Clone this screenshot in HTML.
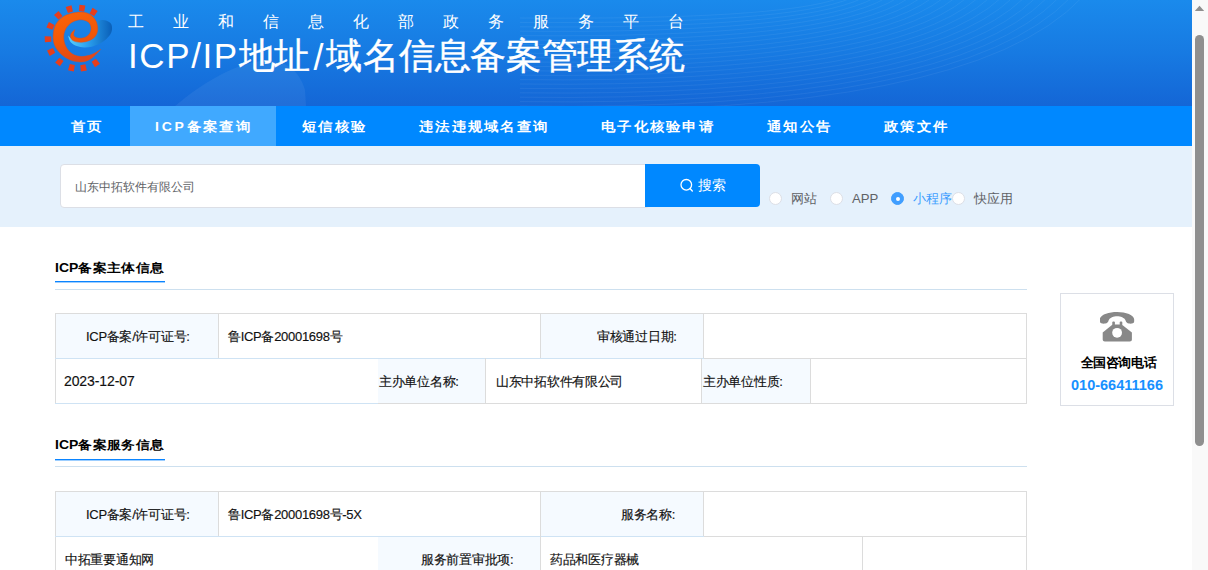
<!DOCTYPE html>
<html><head><meta charset="utf-8">
<style>
*{margin:0;padding:0;box-sizing:border-box}
html,body{width:1208px;height:570px;overflow:hidden;background:#fff;font-family:"Liberation Sans",sans-serif;color:#303133}
.abs{position:absolute}
#header{position:absolute;left:0;top:0;width:1192px;height:106px;background:linear-gradient(180deg,#1a8aec 0%,#177ae2 50%,#1466d6 100%);overflow:hidden}
#nav{position:absolute;left:0;top:106px;width:1192px;height:40px;background:#0088ff}
#nav .it{position:absolute;top:0;height:40px;line-height:40px;color:#fff;font-size:14px;font-weight:bold;letter-spacing:2.3px;white-space:nowrap;transform:scaleY(0.9);transform-origin:50% 50%}
#active{position:absolute;left:130px;top:0;width:146px;height:40px;background:#40a9ff}
#search{position:absolute;left:0;top:146px;width:1192px;height:81px;background:#e5f1fc}
#input{position:absolute;left:60px;top:164px;width:590px;height:44px;background:#fff;border:1px solid #dcdfe6;border-radius:4px}
#input span{position:absolute;left:14px;top:1px;line-height:42px;font-size:12px;color:#606266}
#btn{position:absolute;left:645px;top:164px;width:115px;height:43px;background:#0088ff;border-radius:0 4px 4px 0;color:#fff;font-size:14px}
.radio{position:absolute;top:192px;width:13px;height:13px;border-radius:50%;background:#fff;border:1px solid #dcdfe6}
.radio.on{background:#409eff;border-color:#409eff}
.radio.on:after{content:"";position:absolute;left:3.5px;top:3.5px;width:4px;height:4px;border-radius:50%;background:#fff}
.rl{position:absolute;top:189.5px;font-size:13.2px;line-height:18px;color:#606266;white-space:nowrap}
.stitle{position:absolute;left:55px;font-size:14px;line-height:18px;letter-spacing:0.3px;font-weight:bold;color:#000;white-space:nowrap;transform:scaleY(0.87);transform-origin:0 0}
.uline{position:absolute;left:55px;width:110px;height:1px;background:#0a84ff;box-shadow:0 1px 0 rgba(10,132,255,0.4)}
.hline{position:absolute;left:55px;width:972px;height:1px;background:#cde0ef}
.cell{position:absolute;font-size:13px;letter-spacing:-0.3px;color:#111;-webkit-text-stroke:0.15px #111;white-space:nowrap;line-height:18px}
.lab{position:absolute;background:#f5faff}
.bd{position:absolute;background:#dcdcdc}
.bdb{position:absolute;background:#cfe3f4}
#phone{position:absolute;left:1060px;top:293px;width:114px;height:113px;border:1px solid #dcdfe6;background:#fff}
#sb{position:absolute;left:1192px;top:0;width:16px;height:570px;background:#f9f9f9}
#thumb{position:absolute;left:1195px;top:35px;width:9px;height:411px;background:#8f8f8f;border-radius:4.5px}
</style></head><body>
<div id="header">
  <svg class="abs" style="left:0;top:0" width="1192" height="106">
    <defs>
      <linearGradient id="wg" x1="0" y1="0" x2="1" y2="1">
        <stop offset="0" stop-color="#ffffff" stop-opacity="0.10"/>
        <stop offset="1" stop-color="#ffffff" stop-opacity="0.02"/>
      </linearGradient>
    </defs>
    <path d="M175 106 C 230 60, 290 40, 305 90 L 306 106 Z" fill="#ffffff" fill-opacity="0.06"/>
    <g fill="none" stroke="#ffffff" stroke-opacity="0.06" stroke-width="1"><path d="M520 18.0 Q 780.0 20.0, 840.0 -2"/><path d="M520 22.4 Q 789.0 24.6, 851.5 -2"/><path d="M520 26.8 Q 798.0 29.2, 863.0 -2"/><path d="M520 31.2 Q 807.0 33.8, 874.5 -2"/><path d="M520 35.6 Q 816.0 38.4, 886.0 -2"/><path d="M520 40.0 Q 825.0 43.0, 897.5 -2"/><path d="M520 44.4 Q 834.0 47.6, 909.0 -2"/><path d="M520 48.8 Q 843.0 52.2, 920.5 -2"/><path d="M520 53.2 Q 852.0 56.8, 932.0 -2"/><path d="M520 57.6 Q 861.0 61.4, 943.5 -2"/><path d="M520 62.0 Q 870.0 66.0, 955.0 -2"/><path d="M520 66.4 Q 879.0 70.6, 966.5 -2"/><path d="M520 70.8 Q 888.0 75.2, 978.0 -2"/><path d="M520 75.2 Q 897.0 79.8, 989.5 -2"/><path d="M520 79.6 Q 906.0 84.4, 1001.0 -2"/><path d="M520 84.0 Q 915.0 89.0, 1012.5 -2"/><path d="M520 88.4 Q 924.0 93.6, 1024.0 -2"/><path d="M520 92.8 Q 933.0 98.2, 1035.5 -2"/><path d="M520 97.2 Q 942.0 102.8, 1047.0 -2"/><path d="M520 101.6 Q 951.0 107.4, 1058.5 -2"/><path d="M520 106.0 Q 960.0 112.0, 1070.0 -2"/><path d="M520 110.4 Q 969.0 116.6, 1081.5 -2"/></g>
  </svg>
  <svg class="abs" style="left:40px;top:0" width="80" height="80" viewBox="0 0 80 80">
    <defs>
      <linearGradient id="og" x1="0" y1="0" x2="0.3" y2="1">
        <stop offset="0" stop-color="#fa640a"/>
        <stop offset="0.6" stop-color="#f25806"/>
        <stop offset="1" stop-color="#e24818"/>
      </linearGradient>
      <linearGradient id="bg2" x1="0" y1="0" x2="1" y2="0">
        <stop offset="0" stop-color="#5ad0ff"/>
        <stop offset="0.45" stop-color="#2aa0ee"/>
        <stop offset="1" stop-color="#0a5fb8"/>
      </linearGradient>
    </defs>
    <g fill="#e63e1c"><path d="M-3 -3.4 L3 -3.4 L2.6 3 L-2.6 3 Z" transform="translate(18.52 15.56) rotate(-41.0)"/><path d="M-3 -3.4 L3 -3.4 L2.6 3 L-2.6 3 Z" transform="translate(29.58 9.47) rotate(-16.7)"/><path d="M-3 -3.4 L3 -3.4 L2.6 3 L-2.6 3 Z" transform="translate(41.96 8.44) rotate(7.2)"/><path d="M-3 -3.4 L3 -3.4 L2.6 3 L-2.6 3 Z" transform="translate(53.38 12.32) rotate(30.4)"/><path d="M-3 -3.4 L3 -3.4 L2.6 3 L-2.6 3 Z" transform="translate(10.75 26.09) rotate(-66.2)"/><path d="M-3 -3.4 L3 -3.4 L2.6 3 L-2.6 3 Z" transform="translate(8.22 39.25) rotate(268.0)"/><path d="M-3 -3.4 L3 -3.4 L2.6 3 L-2.6 3 Z" transform="translate(11.42 51.73) rotate(243.2)"/><path d="M-3 -3.4 L3 -3.4 L2.6 3 L-2.6 3 Z" transform="translate(19.61 61.74) rotate(218.3)"/><path d="M-3 -3.4 L3 -3.4 L2.6 3 L-2.6 3 Z" transform="translate(31.66 67.48) rotate(192.6)"/><path d="M-3 -3.4 L3 -3.4 L2.6 3 L-2.6 3 Z" transform="translate(43.31 67.76) rotate(170.2)"/><path d="M-3 -3.4 L3 -3.4 L2.6 3 L-2.6 3 Z" transform="translate(55.54 62.68) rotate(144.7)"/></g>
    <path d="M27.97 35.51 C 28.53 36.73, 29.28 40.88, 31.33 42.81 C 33.39 44.74, 36.76 46.48, 40.32 47.07 C 43.87 47.67, 48.74 47.39, 52.67 46.40 C 56.60 45.41, 60.81 43.41, 63.90 41.12 C 66.98 38.84, 69.92 35.42, 71.19 32.70 C 72.47 29.99, 72.19 26.81, 71.53 24.84 C 70.88 22.88, 69.10 21.70, 67.26 20.91 C 65.43 20.13, 62.40 20.03, 60.53 20.13 C 58.66 20.22, 56.78 21.25, 56.04 21.47 C 56.22 22.97, 57.72 27.84, 57.16 30.46 C 56.60 33.08, 54.91 35.32, 52.67 37.19 C 50.42 39.07, 46.68 41.12, 43.69 41.69 C 40.69 42.25, 37.32 41.59, 34.70 40.56 C 32.08 39.53, 29.09 36.35, 27.97 35.51 Z" fill="url(#bg2)"/>
    <path d="M60.53 49.55 C 59.22 50.86, 55.47 55.38, 52.67 57.40 C 49.86 59.43, 47.05 61.11, 43.69 61.67 C 40.32 62.23, 36.01 61.86, 32.46 60.77 C 28.90 59.69, 25.25 57.59, 22.35 55.16 C 19.45 52.73, 16.59 49.36, 15.05 46.18 C 13.52 43.00, 13.05 39.63, 13.14 36.07 C 13.24 32.52, 13.89 28.12, 15.61 24.84 C 17.34 21.57, 20.11 18.48, 23.47 16.42 C 26.84 14.36, 31.90 13.05, 35.83 12.49 C 39.76 11.93, 43.87 11.93, 47.05 13.05 C 50.24 14.18, 53.14 16.70, 54.91 19.23 C 56.69 21.75, 57.63 25.40, 57.72 28.21 C 57.81 31.02, 56.88 34.01, 55.47 36.07 C 54.07 38.13, 51.64 39.53, 49.30 40.56 C 46.96 41.59, 43.97 42.15, 41.44 42.25 C 38.91 42.34, 35.92 41.87, 34.14 41.12 C 32.36 40.38, 31.24 39.07, 30.77 37.76 C 30.30 36.45, 30.64 34.63, 31.33 33.26 C 32.03 31.90, 34.33 30.18, 34.93 29.56 C 34.74 30.18, 33.94 32.18, 33.80 33.26 C 33.67 34.35, 33.43 35.27, 34.14 36.07 C 34.85 36.88, 36.29 37.87, 38.07 38.09 C 39.85 38.32, 42.84 38.22, 44.81 37.42 C 46.77 36.61, 48.83 34.99, 49.86 33.26 C 50.89 31.54, 51.26 28.96, 50.98 27.09 C 50.70 25.22, 49.77 23.25, 48.18 22.04 C 46.59 20.82, 43.87 19.88, 41.44 19.79 C 39.01 19.70, 36.01 20.26, 33.58 21.47 C 31.15 22.69, 28.49 24.66, 26.84 27.09 C 25.20 29.52, 23.89 32.89, 23.70 36.07 C 23.51 39.25, 24.26 43.18, 25.72 46.18 C 27.18 49.17, 29.84 52.31, 32.46 54.04 C 35.08 55.76, 38.26 56.41, 41.44 56.51 C 44.62 56.60, 48.36 55.76, 51.55 54.60 C 54.73 53.44, 59.03 50.39, 60.53 49.55 Z" fill="url(#og)" stroke="#e04a1a" stroke-width="0.5"/>
  </svg>
  <div class="abs" style="left:128px;top:13px;font-size:16px;line-height:18px;letter-spacing:29.03px;color:#fff;white-space:nowrap">工业和信息化部政务服务平台</div>
  <div class="abs" style="left:128px;top:33.8px;font-size:36px;letter-spacing:-0.35px;line-height:44px;color:#fff;white-space:nowrap;-webkit-text-stroke:0.4px #fff"><span style="letter-spacing:1.6px;font-size:35px;-webkit-text-stroke:0">ICP/IP</span>地<span style="letter-spacing:3px">址</span><span style="letter-spacing:3px;-webkit-text-stroke:0;position:relative;top:2px">/</span><span style="letter-spacing:1px">域</span>名信息备案管理系统</div>
</div>
<div id="nav">
  <div id="active"></div>
  <div class="it" style="left:71px">首页</div>
  <div class="it" style="left:155px"><span style="letter-spacing:2.8px">ICP</span>备案查询</div>
  <div class="it" style="left:302px">短信核验</div>
  <div class="it" style="left:419px">违法违规域名查询</div>
  <div class="it" style="left:601px">电子化核验申请</div>
  <div class="it" style="left:767px">通知公告</div>
  <div class="it" style="left:884px">政策文件</div>
</div>
<div id="search"></div>
<div id="input"><span>山东中拓软件有限公司</span></div>
<div id="btn">
  <svg class="abs" style="left:34.5px;top:13.5px" width="14" height="15" viewBox="0 0 14 15"><circle cx="6.3" cy="6.8" r="5.3" fill="none" stroke="#fff" stroke-width="1.3"/><path d="M10 10.6 L12.3 12.9" stroke="#fff" stroke-width="1.4" stroke-linecap="round"/></svg>
  <div class="abs" style="left:53px;top:11px;font-size:14px;line-height:20px;color:#fff">搜索</div>
</div>
<div class="radio" style="left:769px"></div><div class="rl" style="left:791px">网站</div>
<div class="radio" style="left:830px"></div><div class="rl" style="left:852px">APP</div>
<div class="radio on" style="left:891px"></div><div class="rl" style="left:913px;color:#409eff">小程序</div>
<div class="radio" style="left:952px"></div><div class="rl" style="left:974px">快应用</div>

<!-- section 1 -->
<div class="stitle" style="top:260px"><span style="letter-spacing:0px">ICP</span>备案主体信息</div>
<div class="uline" style="top:281px"></div>
<div class="hline" style="top:289px"></div>


<!-- table 1 -->
<div class="lab" style="left:55px;top:313px;width:164px;height:45px"></div>
<div class="lab" style="left:540px;top:313px;width:164px;height:45px"></div>
<div class="lab" style="left:378px;top:358px;width:107px;height:45px"></div>
<div class="lab" style="left:701px;top:358px;width:109px;height:45px"></div>
<div class="bd" style="left:55px;top:313px;width:972px;height:1px"></div>
<div class="bd" style="left:55px;top:313px;width:1px;height:91px"></div>
<div class="bd" style="left:1026px;top:313px;width:1px;height:91px"></div>
<div class="bdb" style="left:55px;top:358px;width:649px;height:1px"></div>
<div class="bd" style="left:704px;top:358px;width:322px;height:1px"></div>
<div class="bdb" style="left:55px;top:403px;width:323px;height:1px"></div>
<div class="bd" style="left:378px;top:403px;width:649px;height:1px"></div>
<div class="bd" style="left:218px;top:313px;width:1px;height:45px"></div>
<div class="bd" style="left:540px;top:313px;width:1px;height:45px"></div>
<div class="bd" style="left:703px;top:313px;width:1px;height:45px"></div>
<div class="bd" style="left:485px;top:358px;width:1px;height:45px"></div>
<div class="bd" style="left:701px;top:358px;width:1px;height:45px"></div>
<div class="bd" style="left:810px;top:358px;width:1px;height:45px"></div>
<div class="cell" style="left:86px;top:328px">ICP备案/许可证号:</div>
<div class="cell" style="left:228px;top:328px">鲁ICP备20001698号</div>
<div class="cell" style="left:597px;top:328px">审核通过日期:</div>
<div class="cell" style="left:64px;top:371.5px;font-size:14px;letter-spacing:-0.1px">2023-12-07</div>
<div class="cell" style="left:379px;top:373px">主办单位名称:</div>
<div class="cell" style="left:496px;top:373px">山东中拓软件有限公司</div>
<div class="cell" style="left:703px;top:373px">主办单位性质:</div>

<!-- section 2 -->
<div class="stitle" style="top:437px"><span style="letter-spacing:0px">ICP</span>备案服务信息</div>
<div class="uline" style="top:459px"></div>
<div class="hline" style="top:466px"></div>

<!-- table 2 -->
<div class="lab" style="left:55px;top:491px;width:164px;height:45px"></div>
<div class="lab" style="left:540px;top:491px;width:164px;height:45px"></div>
<div class="lab" style="left:378px;top:536px;width:163px;height:45px"></div>
<div class="bd" style="left:55px;top:491px;width:972px;height:1px"></div>
<div class="bd" style="left:55px;top:491px;width:1px;height:90px"></div>
<div class="bd" style="left:1026px;top:491px;width:1px;height:90px"></div>
<div class="bdb" style="left:55px;top:536px;width:649px;height:1px"></div>
<div class="bd" style="left:704px;top:536px;width:322px;height:1px"></div>
<div class="bd" style="left:218px;top:491px;width:1px;height:45px"></div>
<div class="bd" style="left:540px;top:491px;width:1px;height:90px"></div>
<div class="bd" style="left:703px;top:491px;width:1px;height:45px"></div>
<div class="bd" style="left:862px;top:536px;width:1px;height:45px"></div>
<div class="cell" style="left:86px;top:506px">ICP备案/许可证号:</div>
<div class="cell" style="left:228px;top:506px">鲁ICP备20001698号-5X</div>
<div class="cell" style="left:621px;top:506px">服务名称:</div>
<div class="cell" style="left:65px;top:551px">中拓重要通知网</div>
<div class="cell" style="left:421px;top:551px">服务前置审批项:</div>
<div class="cell" style="left:550px;top:551px">药品和医疗器械</div>
<div id="phone">
  <svg class="abs" style="left:39px;top:18px" width="36" height="31" viewBox="0 0 36 31">
    <path d="M-0.2 8 C -0.6 3, 8 0, 17.1 0 C 26 0, 34.6 3, 34.2 8 L 34.1 10 C 33.9 11.6, 31 11.9, 29 11.6 C 27 11.3, 26.1 10, 25.6 8.4 C 24.5 5.6, 20.5 4.2, 17.1 4.2 C 13.7 4.2, 9.7 5.6, 8.6 8.4 C 8.1 10, 7.2 11.3, 5.2 11.6 C 3.2 11.9, 0.2 11.6, 0 10 Z" fill="#888"/>
    <rect x="12.3" y="9.6" width="2.6" height="4" rx="1" fill="#888"/>
    <rect x="19.7" y="9.6" width="2.6" height="4" rx="1" fill="#888"/>
    <path d="M12.6 12.6 L 21.7 12.6 L 31.9 20.4 L 31.9 27.6 C 31.9 28.8, 31 29.6, 29.8 29.6 L 4.8 29.6 C 3.6 29.6, 2.7 28.8, 2.7 27.6 L 2.7 20.4 Z" fill="#888"/>
    <circle cx="17.1" cy="20.8" r="4.9" fill="#fff"/>
  </svg>
  <div class="abs" style="left:1.5px;top:59.5px;width:112px;text-align:center;font-size:13px;letter-spacing:-0.35px;line-height:18px;font-weight:bold;color:#000">全国咨询电话</div>
  <div class="abs" style="left:0;top:82px;width:112px;text-align:center;font-size:14.5px;line-height:18px;font-weight:bold;color:#1890ff">010-66411166</div>
</div>
<div id="sb"><svg class="abs" style="left:0;top:0" width="16" height="16"><path d="M2.8 11 L12.2 11 L7.5 5.7 Z" fill="#8f8f8f"/></svg></div><div id="thumb"></div>
</body></html>
